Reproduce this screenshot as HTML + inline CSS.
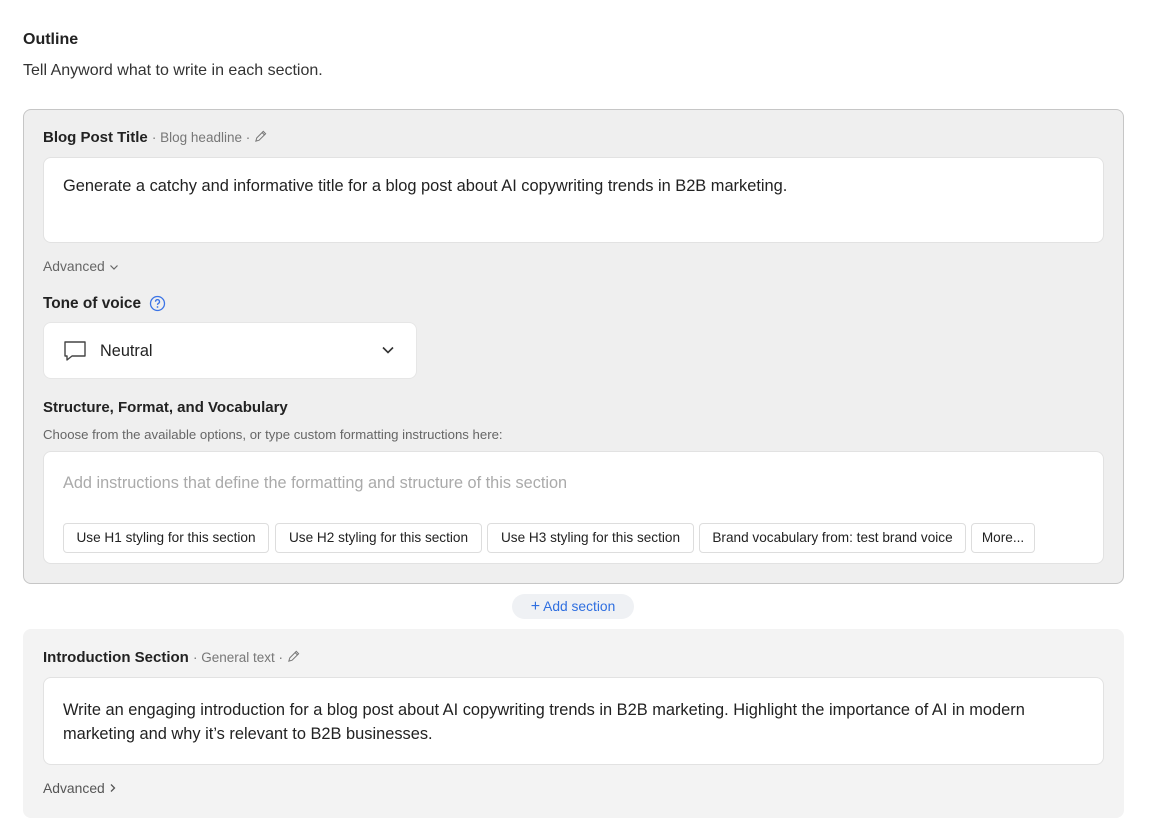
<!DOCTYPE html>
<html><head><meta charset="utf-8"><style>
*{box-sizing:border-box;margin:0;padding:0}
body{width:1157px;height:828px;background:#fff;font-family:"Liberation Sans",sans-serif;color:#222;position:relative;overflow:hidden}
.a{position:absolute}
.card1{left:23px;top:109px;width:1101px;height:475px;background:#efefef;border:1px solid #c6c6c6;border-radius:8px}
.card2{left:23px;top:629px;width:1101px;height:189px;background:#f3f3f3;border-radius:8px}
.box{background:#fff;border:1px solid #e2e2e2;border-radius:8px}
.h{font-size:15px;font-weight:bold;color:#222}
.meta{font-size:13.5px;color:#777;font-weight:normal}
.chip{position:absolute;top:523px;height:30px;border:1px solid #ddd;border-radius:4px;background:#fff;font-size:13.6px;color:#222;line-height:28px;text-align:center;white-space:nowrap}
</style></head><body>
<div class="a" style="left:23px;top:31px;font-size:16px;font-weight:bold">Outline</div>
<div class="a" style="left:23px;top:62px;font-size:16px;color:#333">Tell Anyword what to write in each section.</div>

<div class="a card1"></div>
<div class="a h" style="left:43px;top:129px">Blog Post Title <span class="meta">· Blog headline · </span><svg width="13" height="13" viewBox="0 0 14 14" style="vertical-align:-1px"><path d="M2 12l1-3.5L10 1.5l2.5 2.5L5.5 11z M9 3l2.5 2.5" fill="none" stroke="#777" stroke-width="1.1"/></svg></div>
<div class="a box" style="left:43px;top:157px;width:1061px;height:86px"></div>
<div class="a" style="left:63px;top:177px;font-size:16.4px;color:#222">Generate a catchy and informative title for a blog post about AI copywriting trends in B2B marketing.</div>
<div class="a" style="left:43px;top:258px;font-size:13.9px;color:#666">Advanced <svg width="10" height="8" viewBox="0 0 10 8"><path d="M1.5 2.5l3.5 3.5 3.5-3.5" fill="none" stroke="#666" stroke-width="1.2"/></svg></div>
<div class="a h" style="left:43px;top:295px;font-size:15.4px">Tone of voice</div>
<svg class="a" style="left:149px;top:295px" width="17" height="17" viewBox="0 0 17 17"><circle cx="8.5" cy="8.5" r="7" fill="none" stroke="#3b74e6" stroke-width="1.3"/><path d="M6.5 6.7a2 2 0 1 1 2.8 1.8c-.6.3-.8.7-.8 1.4" fill="none" stroke="#3b74e6" stroke-width="1.3"/><circle cx="8.5" cy="12" r=".9" fill="#3b74e6"/></svg>
<div class="a box" style="left:43px;top:322px;width:374px;height:57px;border-color:#e6e6e6"></div>
<svg class="a" style="left:63px;top:340px" width="24" height="22" viewBox="0 0 24 22"><path d="M2 2h20v14H9l-5 4v-4H2z" fill="none" stroke="#444" stroke-width="1.4" stroke-linejoin="round"/></svg>
<div class="a" style="left:100px;top:342px;font-size:16.3px;color:#222">Neutral</div>
<svg class="a" style="left:381px;top:345px" width="14" height="10" viewBox="0 0 14 10"><path d="M2 2.5l5 5 5-5" fill="none" stroke="#333" stroke-width="1.6"/></svg>
<div class="a h" style="left:43px;top:399px;font-size:15px">Structure, Format, and Vocabulary</div>
<div class="a" style="left:43px;top:427px;font-size:13.2px;color:#666">Choose from the available options, or type custom formatting instructions here:</div>
<div class="a box" style="left:43px;top:451px;width:1061px;height:113px"></div>
<div class="a" style="left:63px;top:474px;font-size:16.3px;color:#aaa">Add instructions that define the formatting and structure of this section</div>
<div class="chip" style="left:63px;width:206px">Use H1 styling for this section</div>
<div class="chip" style="left:275px;width:207px">Use H2 styling for this section</div>
<div class="chip" style="left:487px;width:207px">Use H3 styling for this section</div>
<div class="chip" style="left:699px;width:267px">Brand vocabulary from: test brand voice</div>
<div class="chip" style="left:971px;width:64px">More...</div>

<div class="a" style="left:512px;top:594px;width:122px;height:25px;background:#eff1f4;border-radius:13px;font-size:13.8px;color:#2f6fe0;line-height:25px;text-align:center;white-space:nowrap"><span style="font-size:16px">+</span> Add section</div>

<div class="a card2"></div>
<div class="a h" style="left:43px;top:649px">Introduction Section <span class="meta">· General text · </span><svg width="13" height="13" viewBox="0 0 14 14" style="vertical-align:-1px"><path d="M2 12l1-3.5L10 1.5l2.5 2.5L5.5 11z M9 3l2.5 2.5" fill="none" stroke="#777" stroke-width="1.1"/></svg></div>
<div class="a box" style="left:43px;top:677px;width:1061px;height:88px"></div>
<div class="a" style="left:63px;top:698px;width:1000px;font-size:16.4px;line-height:24px;color:#222">Write an engaging introduction for a blog post about AI copywriting trends in B2B marketing. Highlight the importance of AI in modern marketing and why it’s relevant to B2B businesses.</div>
<div class="a" style="left:43px;top:780px;font-size:13.9px;color:#555">Advanced <svg width="8" height="10" viewBox="0 0 8 10"><path d="M2 1.5l3.5 3.5-3.5 3.5" fill="none" stroke="#555" stroke-width="1.3"/></svg></div>
</body></html>
